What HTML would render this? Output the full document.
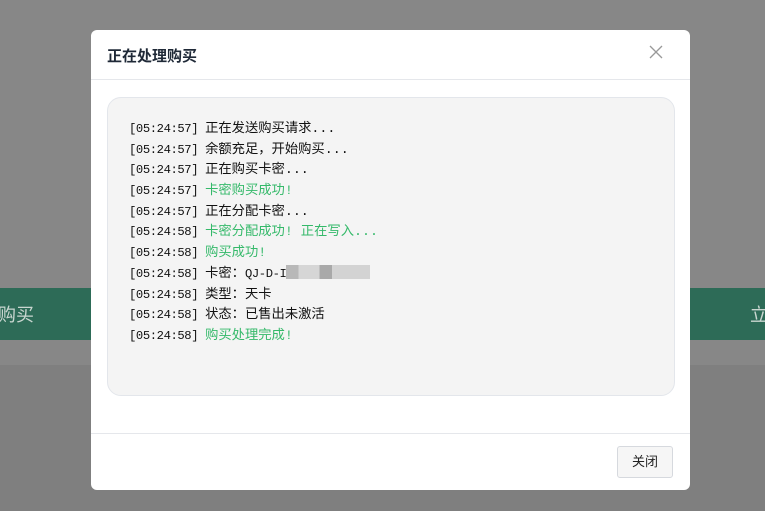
<!DOCTYPE html>
<html><head><meta charset="utf-8"><style>
*{margin:0;padding:0;box-sizing:border-box}
body{width:765px;height:511px;overflow:hidden;background:#878787;position:relative;font-family:"Liberation Sans","Noto Sans CJK SC",sans-serif}
.bg1{position:absolute;left:0;top:288px;width:765px;height:52px;background:#2d6b57}
.bg1 span{position:absolute;top:13px;color:#c9d6d0;font-size:18px;font-weight:normal}
.bg2{position:absolute;left:0;top:365px;width:765px;height:146px;background:#7f7f7f}
.modal{position:absolute;left:91px;top:30px;width:599px;height:460px;background:#fff;border-radius:6px}
.hd{height:50px;border-bottom:1px solid #e5e7eb;padding:15px 16px;font-size:15px;font-weight:bold;color:#1f2937}
.x{position:absolute;right:26px;top:14px;width:16px;height:16px}
.log{position:absolute;left:16px;top:67px;width:568px;height:299px;background:#f4f4f4;border:1px solid #e3e6eb;border-radius:14px;padding:19px 0 0 21px}
.l{height:20.7px;font-size:13.3px;color:#111;white-space:nowrap;font-family:"Liberation Mono","Noto Sans CJK SC",monospace}
.t{font-size:12.2px;letter-spacing:-0.4px}
.g{color:#35b96a}
.blur{display:inline-block;width:84px;height:14px;vertical-align:-2px;background:linear-gradient(90deg,#b8b8b8 0 15%,#d6d6d6 15% 40%,#a9a9a9 40% 55%,#d3d3d3 55% 100%)}
.ft{position:absolute;left:0;top:403px;width:599px;border-top:1px solid #e5e7eb}
.btn{position:absolute;left:526px;top:416px;width:56px;height:32px;border:1px solid #d6d9de;border-radius:3px;background:#f6f6f6;font-size:13px;color:#222;text-align:center;line-height:30px}
</style></head><body>
<div class="bg1"><span style="left:-2px">购买</span><span style="left:750px">立</span></div>
<div class="bg2"></div>
<div class="modal">
<div class="hd">正在处理购买</div>
<svg class="x" viewBox="0 0 16 16"><path d="M2 2L14 14M14 2L2 14" stroke="#999" stroke-width="1.3"/></svg>
<div class="log">
<div class="l"><span class="t">[05:24:57] </span>正在发送购买请求...</div>
<div class="l"><span class="t">[05:24:57] </span>余额充足，开始购买...</div>
<div class="l"><span class="t">[05:24:57] </span>正在购买卡密...</div>
<div class="l"><span class="t">[05:24:57] </span><span class="g">卡密购买成功!</span></div>
<div class="l"><span class="t">[05:24:57] </span>正在分配卡密...</div>
<div class="l"><span class="t">[05:24:58] </span><span class="g">卡密分配成功! 正在写入...</span></div>
<div class="l"><span class="t">[05:24:58] </span><span class="g">购买成功!</span></div>
<div class="l"><span class="t">[05:24:58] </span>卡密：<span class="t">QJ-D-I</span><span class="blur"></span></div>
<div class="l"><span class="t">[05:24:58] </span>类型：天卡</div>
<div class="l"><span class="t">[05:24:58] </span>状态：已售出未激活</div>
<div class="l"><span class="t">[05:24:58] </span><span class="g">购买处理完成!</span></div>
</div>
<div class="ft"></div>
<div class="btn">关闭</div>
</div>
</body></html>
